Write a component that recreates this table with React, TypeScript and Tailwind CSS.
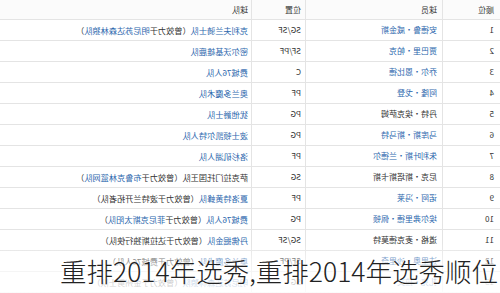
import React from "react";

type Seg = { t: string; b?: boolean };
type Row = { n: string; p: string; pb: boolean; pos: string; team: Seg[] };

const rows: Row[] = [
  { n: "1", p: "安德鲁·威金斯", pb: true, pos: "SG/SF", team: [{ t: "克利夫兰骑士队", b: true }, { t: "（曾效力于" }, { t: "明尼苏达森林狼队", b: true }, { t: "）" }] },
  { n: "2", p: "贾巴里·帕克", pb: true, pos: "SF/PF", team: [{ t: "密尔沃基雄鹿队", b: true }] },
  { n: "3", p: "乔尔·恩比德", pb: true, pos: "C", team: [{ t: "费城76人队", b: true }] },
  { n: "4", p: "阿隆·戈登", pb: true, pos: "PF", team: [{ t: "奥兰多魔术队", b: true }] },
  { n: "5", p: "丹特·埃克萨姆", pb: false, pos: "PG", team: [{ t: "犹他爵士队", b: true }] },
  { n: "6", p: "马库斯·斯马特", pb: true, pos: "PG", team: [{ t: "波士顿凯尔特人队", b: true }] },
  { n: "7", p: "朱利叶斯·兰德尔", pb: true, pos: "PF", team: [{ t: "洛杉矶湖人队", b: true }] },
  { n: "8", p: "尼克·斯塔斯卡斯", pb: false, pos: "SG", team: [{ t: "萨克拉门托国王队（曾效力于" }, { t: "布鲁克林篮网队", b: true }, { t: "）" }] },
  { n: "9", p: "诺阿·冯莱", pb: true, pos: "PF", team: [{ t: "夏洛特黄蜂队", b: true }, { t: "（曾效力于波特兰开拓者队）" }] },
  { n: "10", p: "埃尔弗里德·佩顿", pb: true, pos: "PG", team: [{ t: "费城76人队", b: true }, { t: "（曾效力于" }, { t: "菲尼克斯太阳队", b: true }, { t: "）" }] },
  { n: "11", p: "道格·麦克德莫特", pb: false, pos: "SG/SF", team: [{ t: "丹佛掘金队", b: true }, { t: "（曾效力于达拉斯独行侠队）" }] },
  { n: "12", p: "达里奥·沙里奇", pb: true, pos: "SF/PF", team: [{ t: "奥兰多魔术队", b: true }, { t: "（曾效力于费城76人队）" }] },
  { n: "13", p: "扎克·拉文", pb: true, pos: "SG", team: [{ t: "明尼苏达森林狼队", b: true }, { t: "（曾效力于金州勇士队）" }] },
];

export default function App() {
  return (
    <div className="relative w-[500px] h-[293px] overflow-hidden bg-white font-['Noto_Sans_CJK_SC','Liberation_Sans',sans-serif]">
      <div className="-scale-x-100 w-[500px] text-[8px] leading-none text-[#333]">
        <div className="flex h-[20px] border-b border-[#e4e4e4] bg-[#fbfbfb]">
          <div className="w-[58px] shrink-0 pl-[6px] flex items-center border-r border-[#e4e4e4]">顺位</div>
          <div className="w-[137px] shrink-0 pl-[5px] flex items-center border-r border-[#e4e4e4]">球员</div>
          <div className="w-[54px] shrink-0 pl-[4px] flex items-center border-r border-[#e4e4e4]">位置</div>
          <div className="flex-1 pl-[3px] flex items-center">球队</div>
        </div>
        {rows.map((r) => (
          <div key={r.n} className="flex h-[21px] border-b border-[#e4e4e4]">
            <div className="w-[58px] shrink-0 pl-[6px] flex items-center border-r border-[#e4e4e4]">{r.n}</div>
            <div className={"w-[137px] shrink-0 pl-[5px] flex items-center border-r border-[#e4e4e4] " + (r.pb ? "text-[#2c67ad]" : "text-[#333]")}>{r.p}</div>
            <div className="w-[54px] shrink-0 pl-[4px] flex items-center border-r border-[#e4e4e4]">{r.pos}</div>
            <div className="flex-1 pl-[3px] flex items-center whitespace-nowrap text-[8.2px]">
              {r.team.map((s, i) => (
                <span key={i} className={s.b ? "text-[#2c67ad]" : "text-[#333]"}>{s.t}</span>
              ))}
            </div>
          </div>
        ))}
      </div>
      <div className="absolute left-0 right-0 bottom-0 h-[50px] bg-linear-to-b from-white/0 via-white/60 to-white/85" />
      <div className="absolute right-[2px] bottom-[9px] text-[26.5px] leading-none font-light text-[#222] whitespace-nowrap [text-shadow:0_0_3px_#fff,0_0_3px_#fff]">
        重排2014年选秀,重排2014年选秀顺位
      </div>
    </div>
  );
}
